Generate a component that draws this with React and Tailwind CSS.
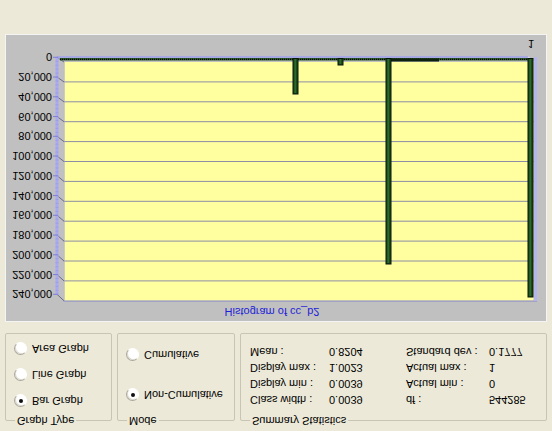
import React from 'react';

const font = "font-['Liberation_Sans',Arial,sans-serif]";

// y scale of the histogram (svg local coords)
const steps = [...Array(13)].map((_, i) => i);
const labelY = (i) => 245.7 - 19.75 * i;
const gridY = (i) => 241 - 19.9 * i;

const bars = [
  { x: 287, w: 5, top: 209 },
  { x: 332, w: 5, top: 238 },
  { x: 380, w: 5, top: 39 },
  { x: 522, w: 5, top: 6 },
];

function Radio({ label, checked }) {
  return (
    <div className="flex items-center gap-[5px] h-[14px]">
      <span className="relative w-[13px] h-[13px] rounded-full border border-[#a8a69c] border-b-white border-r-white bg-white shadow-[inset_1px_1px_0_#dedbd0] shrink-0">
        {checked && (
          <span className="absolute left-[3.5px] top-[3.5px] w-[4px] h-[4px] rounded-full bg-[#101010]" />
        )}
      </span>
      <span>{label}</span>
    </div>
  );
}

function GroupBox({ title, className, children }) {
  return (
    <div className={`relative h-[88px] border border-[#c8c5b4] rounded-[2px] ${className}`}>
      <span className="absolute -top-[8px] left-[9px] px-[2px] bg-[#ece9d8] leading-[14px]">{title}</span>
      {children}
    </div>
  );
}

function Histogram() {
  return (
    <svg width="540" height="268" className="block">
      {/* back wall */}
      <rect x="57.5" y="2" width="470" height="239" fill="#ffffa0" />
      {steps.slice(1, 12).map((i) => (
        <line key={i} x1="57.5" x2="527.5" y1={gridY(i)} y2={gridY(i)} stroke="#8c8ca6" strokeWidth="1" />
      ))}
      <line x1="57.5" x2="531" y1="2" y2="2" stroke="#8484c8" strokeWidth="1.2" />
      <line x1="58" x2="58" y1="2" y2="241" stroke="#9c9cdc" strokeWidth="1" />
      <rect x="528" y="2" width="3" height="244" fill="#b4b4ee" />
      {/* side wall diagonals */}
      {steps.map((i) => (
        <line key={i} x1="51" y1={labelY(i)} x2="58" y2={gridY(i)} stroke="#6c6c88" strokeWidth="1" />
      ))}
      {/* axes */}
      <line x1="51" x2="522" y1="246" y2="246" stroke="#a0a0ee" strokeWidth="1.5" />
      <line x1="522" y1="246" x2="528" y2="241" stroke="#d8d8f8" strokeWidth="1.5" />
      <rect x="49.5" y="8" width="3" height="238" fill="#aaaaf2" />
      {[...Array(61)].map((_, k) => (
        <line key={k} x1="49.5" x2="52.5" y1={245.7 - 3.95 * k} y2={245.7 - 3.95 * k} stroke="#9898e6" strokeWidth="0.7" />
      ))}
      {steps.map((i) => (
        <g key={i}>
          <line x1="47" x2="52" y1={labelY(i)} y2={labelY(i)} stroke="#8080d8" strokeWidth="1" />
          <text x="46" y={labelY(i)} textAnchor="end" dominantBaseline="central" fontSize="11" fill="#000" fontFamily="Liberation Sans, Arial, sans-serif">
            {(i * 20000).toLocaleString('en-US')}
          </text>
        </g>
      ))}
      {/* bars */}
      <rect x="54" y="242.5" width="468" height="2.5" fill="#2a5a2a" />
      <line x1="54" x2="522" y1="243.7" y2="243.7" stroke="#000" strokeWidth="1.2" strokeDasharray="1 1" />
      <rect x="385" y="241.5" width="48" height="3" fill="#0d1f0d" />
      {bars.map((b, i) => (
        <g key={i}>
          <rect x={b.x} y={b.top} width={b.w} height={244.5 - b.top} fill="#1a4a1a" stroke="#081608" strokeWidth="1" />
          <rect x={b.x + 1.5} y={b.top + 1} width={b.w - 3.5} height={243 - b.top} fill="#2c6a2c" />
        </g>
      ))}
      <text x="525" y="259" textAnchor="middle" dominantBaseline="central" fontSize="11" fill="#000" fontFamily="Liberation Sans, Arial, sans-serif">
        1
      </text>
    </svg>
  );
}

export default function App() {
  const stats = [
    ['Class width :', '0.0039', 'df :', '544285'],
    ['Display min :', '0.0039', 'Actual min :', '0'],
    ['Display max :', '1.0023', 'Actual max :', '1'],
    ['Mean :', '0.8204', 'Standard dev :', '0.1777'],
  ];

  return (
    <div className={`w-[552px] h-[431px] bg-[#ece9d8] overflow-hidden -scale-y-100 ${font} text-[11px] text-black`}>
      <div className="flex flex-col px-[5px] pt-[10px]">
        {/* option groups */}
        <div className="flex gap-[5px]">
          <GroupBox title="Graph Type" className="w-[107px]">
            <div className="flex flex-col gap-[12px] pl-[8px] pt-[12px]">
              <Radio label="Bar Graph" checked />
              <Radio label="Line Graph" />
              <Radio label="Area Graph" />
            </div>
          </GroupBox>
          <GroupBox title="Mode" className="w-[118px]">
            <div className="flex flex-col gap-[26px] pl-[8px] pt-[18px]">
              <Radio label="Non-Cumulative" checked />
              <Radio label="Cumulative" />
            </div>
          </GroupBox>
          <GroupBox title="Summary Statistics" className="w-[307px]">
            <div className="grid grid-cols-[79px_77px_83px_1fr] pl-[9px] pt-[12px]">
              {stats.map((row) =>
                row.map((cell, j) => (
                  <div key={row[0] + j} className="h-[16px] leading-[16px] whitespace-nowrap">
                    {cell}
                  </div>
                ))
              )}
            </div>
          </GroupBox>
        </div>

        {/* chart panel */}
        <div className="mt-[11px] h-[288px] bg-[#c0c0c0] border border-[#f4f4f4]">
          <div className="h-[18px] leading-[18px] text-center pr-[8px] text-[#1e1ed6]">Histogram of cc_b2</div>
          <Histogram />
        </div>
      </div>
    </div>
  );
}
